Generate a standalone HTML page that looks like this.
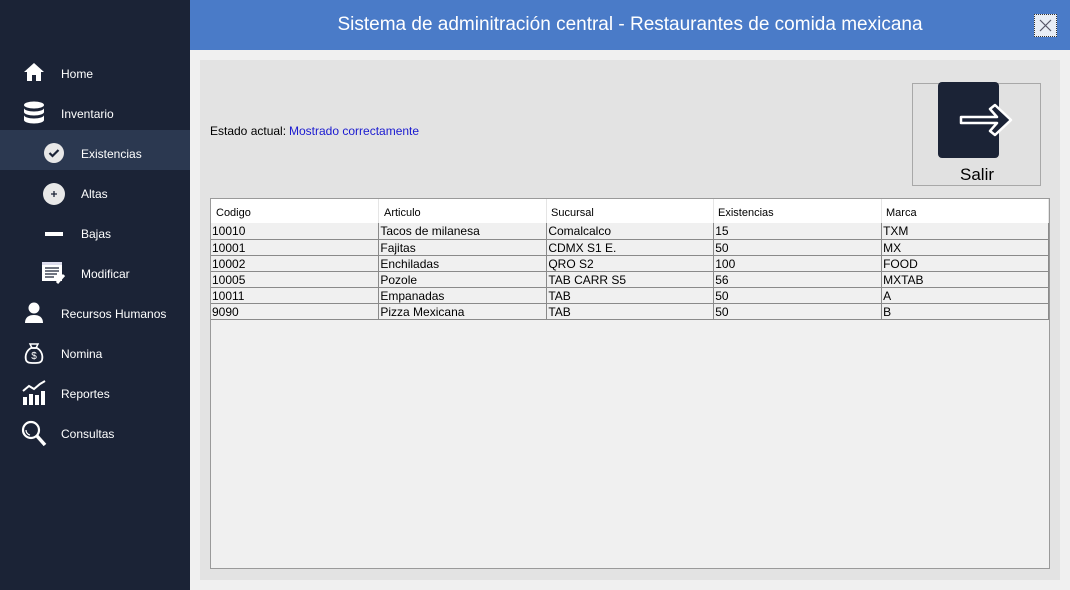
<!DOCTYPE html>
<html><head><meta charset="utf-8"><style>
*{margin:0;padding:0;box-sizing:border-box}
body{width:1070px;height:590px;overflow:hidden;background:#f0f0f0;font-family:"Liberation Sans",sans-serif;font-size:12px;color:#000;position:relative}
.sb{position:absolute;left:0;top:0;width:190px;height:590px;background:#1b2336}
.it{position:absolute;left:0;width:190px;height:40px;color:#fff;font-size:12px}
.it span{position:absolute;top:14px}
.it svg{position:absolute}
.hd{position:absolute;left:190px;top:0;width:880px;height:50px;background:#4a7bc8;color:#fff;font-size:19px;text-align:center;line-height:50px}
.x{position:absolute;left:1034px;top:14px;width:23px;height:23px;background:#e8edf5;border:1px dotted #333}
.pn{position:absolute;left:200px;top:60px;width:860px;height:520px;background:#e3e3e3}
.tb{position:absolute;left:210px;top:198px;width:840px;height:371px;background:#f0f0f0;border:1px solid #9a9a9a}
.c{position:absolute;white-space:nowrap;font-size:12px}
.tb td{height:16px;padding:2px 0 0 1px;border-right:1px solid #8a8a8a;border-bottom:1px solid #8a8a8a;line-height:13px;white-space:nowrap;overflow:hidden}
.tb td:nth-child(1){width:168px}.tb td:nth-child(2){width:168px}.tb td:nth-child(3){width:167px}.tb td:nth-child(4){width:168px}.tb td:nth-child(5){width:167px}
</style></head><body>
<div class="sb">
 <div class="it" style="top:53px"><svg style="left:23px;top:9px" width="22" height="20" viewBox="0 0 22 20"><path d="M11 1 L1 10 L4 10 L4 19 L9 19 L9 13 L13 13 L13 19 L18 19 L18 10 L21 10 Z" fill="#fff"/></svg><span style="left:61px">Home</span></div>
 <div class="it" style="top:93px"><svg style="left:23px;top:8px" width="22" height="24" viewBox="0 0 22 24"><ellipse cx="11" cy="4" rx="10" ry="3.5" fill="#fff"/><path d="M1 7c0 2 4.5 3.5 10 3.5S21 9 21 7v4c0 2-4.5 3.5-10 3.5S1 13 1 11z" fill="#fff"/><path d="M1 14c0 2 4.5 3.5 10 3.5S21 16 21 14v5c0 2-4.5 3.5-10 3.5S1 21 1 19z" fill="#fff"/></svg><span style="left:61px">Inventario</span></div>
 <div class="it" style="top:130px;background:#2b3850"><svg style="left:44px;top:13px" width="20" height="20" viewBox="0 0 20 20"><circle cx="10" cy="10" r="10" fill="#e8e8e8"/><path d="M5.5 10 L8.5 13 L14.5 7" stroke="#1b2336" stroke-width="2.2" fill="none"/></svg><span style="left:81px;top:17px">Existencias</span></div>
 <div class="it" style="top:173px"><svg style="left:43px;top:10px" width="22" height="22" viewBox="0 0 22 22"><circle cx="11" cy="11" r="11" fill="#e8e8e8"/><path d="M11 8v6M8 11h6" stroke="#1b2336" stroke-width="1.3"/></svg><span style="left:81px">Altas</span></div>
 <div class="it" style="top:213px"><div style="position:absolute;left:45px;top:19px;width:18px;height:4px;background:#fff"></div><span style="left:81px">Bajas</span></div>
 <div class="it" style="top:253px"><svg style="left:41px;top:8px" width="25" height="24" viewBox="0 0 25 24"><rect x="1" y="1" width="20" height="19" fill="#fff"/><rect x="1" y="1" width="20" height="3" fill="#dde"/><path d="M4 7h14M4 10h14M4 13h12M4 16h9" stroke="#1b2336" stroke-width="1.2"/><path d="M16 22 L23 14" stroke="#fff" stroke-width="3"/></svg><span style="left:81px">Modificar</span></div>
 <div class="it" style="top:293px"><svg style="left:24px;top:9px" width="20" height="22" viewBox="0 0 20 22"><circle cx="10" cy="6" r="5.5" fill="#fff"/><path d="M1 21c0-6 4-8 9-8s9 2 9 8z" fill="#fff"/></svg><span style="left:61px">Recursos Humanos</span></div>
 <div class="it" style="top:333px"><svg style="left:24px;top:9px" width="20" height="22" viewBox="0 0 20 22"><path d="M6 2h8l-2 4h-4z" stroke="#fff" fill="none" stroke-width="1.5"/><path d="M7 6C2 9 1 14 2 18c1 3 4 3 8 3s7 0 8-3c1-4 0-9-5-12z" stroke="#fff" fill="none" stroke-width="1.8"/><text x="10" y="17" fill="#fff" font-size="10" text-anchor="middle" font-family="Liberation Sans">$</text></svg><span style="left:61px">Nomina</span></div>
 <div class="it" style="top:373px"><svg style="left:22px;top:7px" width="25" height="26" viewBox="0 0 25 26"><path d="M1 11 L7 6 L12 9 L18 4 L23 1" stroke="#fff" stroke-width="2" fill="none"/><rect x="1" y="17" width="4" height="8" fill="#fff"/><rect x="7" y="14" width="4" height="11" fill="#fff"/><rect x="13" y="15" width="4" height="10" fill="#fff"/><rect x="19" y="11" width="4" height="14" fill="#fff"/></svg><span style="left:61px">Reportes</span></div>
 <div class="it" style="top:413px"><svg style="left:21px;top:7px" width="26" height="28" viewBox="0 0 26 28"><circle cx="10" cy="10" r="8" stroke="#fff" stroke-width="2.2" fill="none"/><path d="M16 16 L24 25" stroke="#fff" stroke-width="3.5"/><path d="M5 10a5 5 0 0 0 4 5" stroke="#fff" stroke-width="1.2" fill="none"/></svg><span style="left:61px">Consultas</span></div>
</div>
<div class="hd">Sistema de adminitración central - Restaurantes de comida mexicana</div>
<div class="x"><svg width="21" height="21" viewBox="0 0 21 21"><path d="M5 5L16 16M16 5L5 16" stroke="#556" stroke-width="1.2"/></svg></div>
<div class="pn"></div>
<div class="c" style="left:210px;top:124px">Estado actual:</div>
<div class="c" style="left:289px;top:124px;color:#1a1ad0">Mostrado correctamente</div>
<div style="position:absolute;left:912px;top:83px;width:129px;height:103px;border:1px solid #a8a8a8;background:#e1e1e1"></div>
<div style="position:absolute;left:938px;top:82px;width:61px;height:76px;background:#1b2336;border-radius:4px"></div>
<svg style="position:absolute;left:955px;top:100px" width="62" height="40" viewBox="0 0 62 40"><path d="M6 17 H42 L35 9 L40 5 L56 20 L40 35 L35 31 L42 23 H6 Z" fill="#1b2336" stroke="#fff" stroke-width="2.5" stroke-linejoin="round"/></svg>
<div class="c" style="left:960px;top:165px;font-size:17px">Salir</div>
<div class="tb">
 <div style="position:absolute;left:0;top:0;width:838px;height:24px;background:#fff"></div>
 <div class="c" style="left:5px;top:8px;font-size:11px">Codigo</div>
 <div class="c" style="left:173px;top:8px;font-size:11px">Articulo</div>
 <div class="c" style="left:340px;top:8px;font-size:11px">Sucursal</div>
 <div class="c" style="left:507px;top:8px;font-size:11px">Existencias</div>
 <div class="c" style="left:675px;top:8px;font-size:11px">Marca</div>
 <div style="position:absolute;left:167px;top:0;width:1px;height:24px;background:#e5e5e5"></div>
 <div style="position:absolute;left:335px;top:0;width:1px;height:24px;background:#e5e5e5"></div>
 <div style="position:absolute;left:502px;top:0;width:1px;height:24px;background:#e5e5e5"></div>
 <div style="position:absolute;left:670px;top:0;width:1px;height:24px;background:#e5e5e5"></div>
 <div style="position:absolute;left:837px;top:0;width:1px;height:24px;background:#e5e5e5"></div>
 <table style="position:absolute;left:0;top:24px;border-collapse:collapse;font-size:12px">
 <tr><td>10010</td><td>Tacos de milanesa</td><td>Comalcalco</td><td>15</td><td>TXM</td></tr>
 <tr><td>10001</td><td>Fajitas</td><td>CDMX S1 E.</td><td>50</td><td>MX</td></tr>
 <tr><td>10002</td><td>Enchiladas</td><td>QRO S2</td><td>100</td><td>FOOD</td></tr>
 <tr><td>10005</td><td>Pozole</td><td>TAB CARR S5</td><td>56</td><td>MXTAB</td></tr>
 <tr><td>10011</td><td>Empanadas</td><td>TAB</td><td>50</td><td>A</td></tr>
 <tr><td>9090</td><td>Pizza Mexicana</td><td>TAB</td><td>50</td><td>B</td></tr>
 </table>
</div>
</body></html>
